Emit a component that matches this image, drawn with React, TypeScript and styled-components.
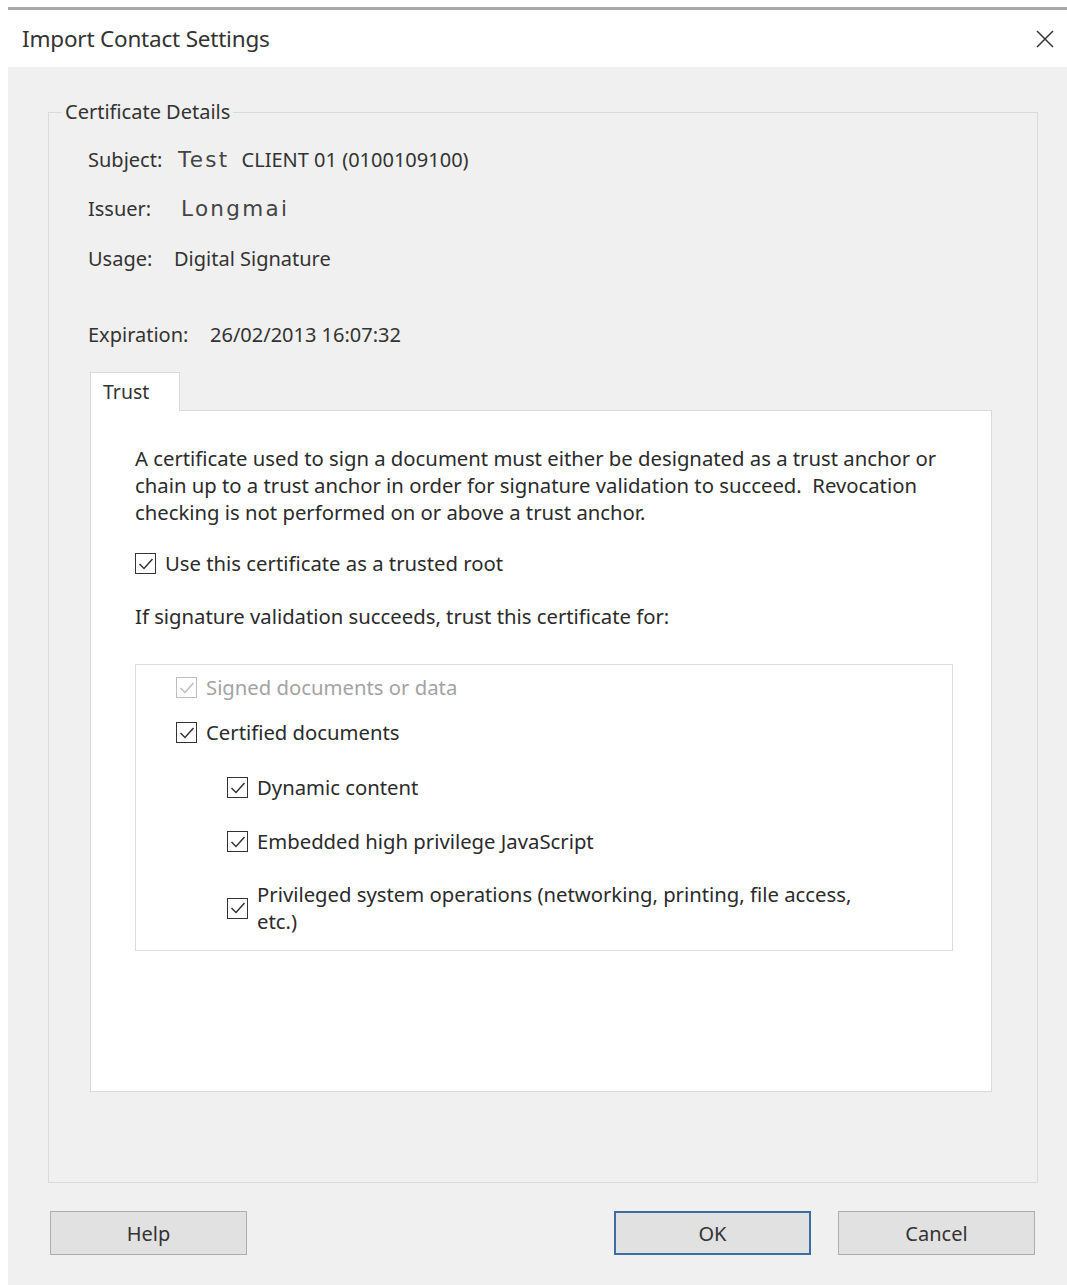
import React from 'react';
import styled, { createGlobalStyle } from 'styled-components';

const GlobalStyle = createGlobalStyle`
  html, body {
    margin: 0;
    padding: 0;
    background: #ffffff;
  }
  body {
    font-family: "Noto Sans", "Open Sans", Arial, sans-serif;
    color: #2b2b2b;
  }
`

const Window = styled.div`
  width: 1067px;
  padding-top: 7px;
`

const Frame = styled.div`
  margin-left: 8px;
  border-top: 3px solid #a8a8a8;
`

const TitleBar = styled.div`
  height: 57px;
  display: flex;
  align-items: center;
  justify-content: space-between;
  background: #ffffff;
  padding: 0 9px 0 14px;
`

const Title = styled.div`
  font-size: 22.5px;
  color: #333;
  letter-spacing: -0.2px;
`

const CloseButton = styled.div`
  width: 26px;
  height: 26px;
  display: flex;
  align-items: center;
  justify-content: center;
`

const Body = styled.div`
  height: 1218px;
  box-sizing: border-box;
  background: #f0f0f0;
  padding: 33px 29px 30px 40px;
  display: flex;
  flex-direction: column;
  gap: 28px;
`

const GroupBox = styled.fieldset`
  flex: 1;
  min-height: 0;
  margin: 0;
  padding: 0 45px 90px 39px;
  border: 1px solid #dadada;
  display: flex;
  flex-direction: column;
`

const Legend = styled.legend`
  margin-left: -26px;
  padding: 0 3px;
  font-size: 20px;
  line-height: 24px;
  color: #333;
`

const Details = styled.div`
  display: flex;
  flex-direction: column;
`

const DetailRow = styled.div<{ $top: number }>`
  display: flex;
  align-items: center;
  height: 30px;
  margin-top: ${({ $top }) => $top}px;
  font-size: 20px;
  color: #333;
`

const DetailLabel = styled.span<{ $width: number }>`
  width: ${({ $width }) => $width}px;
  flex: none;
`

const WideValue = styled.span`
  font-family: "DejaVu Sans", Verdana, sans-serif;
  font-size: 21.5px;
  letter-spacing: 2.3px;
  color: #444;
  margin-right: 12px;
`

const TabStrip = styled.div`
  display: flex;
  margin: 23px 0 -1px 2px;
  position: relative;
  z-index: 1;
`

const Tab = styled.div`
  width: 90px;
  height: 39px;
  box-sizing: border-box;
  background: #ffffff;
  border: 1px solid #d9d9d9;
  border-bottom: none;
  padding: 5px 0 0 12px;
  font-size: 19.5px;
  color: #333;
`

const TabPanel = styled.div`
  flex: 1;
  margin-left: 2px;
  background: #ffffff;
  border: 1px solid #d9d9d9;
  padding: 34px 38px 0 44px;
  font-size: 20.3px;
  line-height: 27px;
  color: #2b2b2b;
`

const Paragraph = styled.p`
  margin: 0;
  white-space: nowrap;
`

const Line = styled.div<{ $top: number }>`
  margin-top: ${({ $top }) => $top}px;
  white-space: nowrap;
`

const CheckRow = styled.div<{ $top: number; $indent?: number; $disabled?: boolean }>`
  display: flex;
  align-items: center;
  gap: 9px;
  margin-top: ${({ $top }) => $top}px;
  margin-left: ${({ $indent }) => $indent ?? 0}px;
  color: ${({ $disabled }) => ($disabled ? '#a3a3a3' : '#2b2b2b')};
  white-space: nowrap;
`

const Box = styled.span<{ $disabled?: boolean }>`
  flex: none;
  width: 21px;
  height: 21px;
  box-sizing: border-box;
  border: 1.5px solid ${({ $disabled }) => ($disabled ? '#bdbdbd' : '#333')};
  background: #fff;
  display: flex;
  align-items: center;
  justify-content: center;
`

const Permissions = styled.div`
  margin-top: 34px;
  width: 818px;
  height: 287px;
  box-sizing: border-box;
  border: 1px solid #dcdcdc;
  padding: 9px 0 0 40px;
`

const ButtonRow = styled.div`
  display: flex;
  align-items: center;
  height: 44px;
  padding: 0 3px 0 2px;
`

const Button = styled.button<{ $primary?: boolean }>`
  width: 197px;
  height: 44px;
  box-sizing: border-box;
  background: #e1e1e1;
  border: ${({ $primary }) => ($primary ? '2px solid #3a6ea5' : '1px solid #adadad')};
  font-family: "Noto Sans", "Open Sans", Arial, sans-serif;
  font-size: 20px;
  color: #333;
  padding: 0;
`

const Spacer = styled.div`
  flex: 1;
`

const Check: React.FC<{ disabled?: boolean }> = ({ disabled }) => (
  <Box $disabled={disabled}>
    <svg width="18" height="18" viewBox="0 0 18 18">
      <path
        d="M2.5 9 L7 13.5 L15.5 4"
        fill="none"
        stroke={disabled ? '#bdbdbd' : '#333'}
        strokeWidth="1.5"
      />
    </svg>
  </Box>
)

export default function App() {
  return (
    <Window>
      <GlobalStyle />
      <Frame>
        <TitleBar>
          <Title>Import Contact Settings</Title>
          <CloseButton>
            <svg width="20" height="20" viewBox="0 0 20 20">
              <path d="M2 2 L18 18 M18 2 L2 18" stroke="#333" strokeWidth="1.5" />
            </svg>
          </CloseButton>
        </TitleBar>
        <Body>
          <GroupBox>
            <Legend>Certificate Details</Legend>
            <Details>
              <DetailRow $top={20}>
                <DetailLabel $width={90}>Subject:</DetailLabel>
                <WideValue>Test</WideValue>
                <span>CLIENT 01 (0100109100)</span>
              </DetailRow>
              <DetailRow $top={19}>
                <DetailLabel $width={93}>Issuer:</DetailLabel>
                <WideValue>Longmai</WideValue>
              </DetailRow>
              <DetailRow $top={20}>
                <DetailLabel $width={86}>Usage:</DetailLabel>
                <span>Digital Signature</span>
              </DetailRow>
              <DetailRow $top={46}>
                <DetailLabel $width={122}>Expiration:</DetailLabel>
                <span>26/02/2013 16:07:32</span>
              </DetailRow>
            </Details>
            <TabStrip>
              <Tab>Trust</Tab>
            </TabStrip>
            <TabPanel>
              <Paragraph>
                A certificate used to sign a document must either be designated as a trust anchor or
                <br />
                chain up to a trust anchor in order for signature validation to succeed.&nbsp; Revocation
                <br />
                checking is not performed on or above a trust anchor.
              </Paragraph>
              <CheckRow $top={24}>
                <Check />
                <span>Use this certificate as a trusted root</span>
              </CheckRow>
              <Line $top={26}>If signature validation succeeds, trust this certificate for:</Line>
              <Permissions>
                <CheckRow $top={0} $disabled>
                  <Check disabled />
                  <span>Signed documents or data</span>
                </CheckRow>
                <CheckRow $top={18}>
                  <Check />
                  <span>Certified documents</span>
                </CheckRow>
                <CheckRow $top={28} $indent={51}>
                  <Check />
                  <span>Dynamic content</span>
                </CheckRow>
                <CheckRow $top={27} $indent={51}>
                  <Check />
                  <span>Embedded high privilege JavaScript</span>
                </CheckRow>
                <CheckRow $top={26} $indent={51}>
                  <Check />
                  <span>
                    Privileged system operations (networking, printing, file access,
                    <br />
                    etc.)
                  </span>
                </CheckRow>
              </Permissions>
            </TabPanel>
          </GroupBox>
          <ButtonRow>
            <Button>Help</Button>
            <Spacer />
            <Button $primary>OK</Button>
            <Button style={{ marginLeft: 27 }}>Cancel</Button>
          </ButtonRow>
        </Body>
      </Frame>
    </Window>
  );
}
